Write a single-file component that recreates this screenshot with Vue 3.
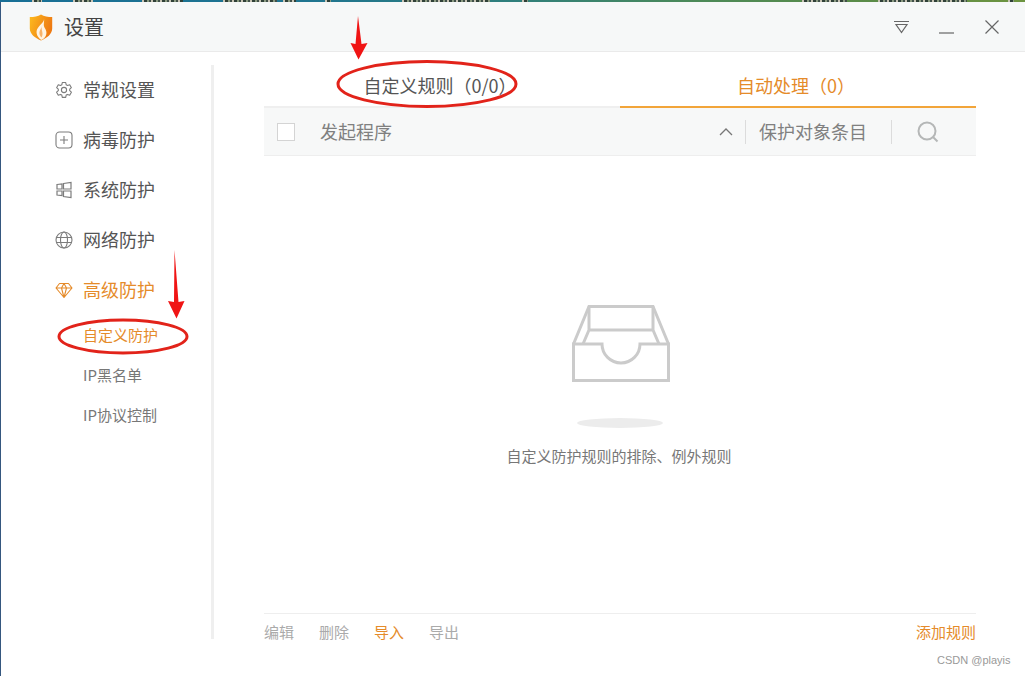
<script setup>
const menu = [
  { label: "常规设置", icon: "gear" },
  { label: "病毒防护", icon: "plus" },
  { label: "系统防护", icon: "tiles" },
  { label: "网络防护", icon: "globe" },
  { label: "高级防护", icon: "diamond", active: true },
];
const subMenu = [
  { label: "自定义防护", active: true },
  { label: "IP黑名单" },
  { label: "IP协议控制" },
];
const actions = [
  { label: "编辑" },
  { label: "删除" },
  { label: "导入", active: true },
  { label: "导出" },
];
// bright bits of the wallpaper showing above the window
const patches = [
  [32, 10], [73, 20], [142, 41], [223, 54], [283, 13], [325, 6],
  [402, 88], [522, 6], [802, 45], [878, 89], [1008, 6],
];
</script>

<template>
  <div class="app">
    <div class="wallpaper">
      <span
        v-for="p in patches"
        :key="p[0]"
        class="patch"
        :style="{ left: p[0] + 'px', width: p[1] + 'px' }"
      />
    </div>

    <div class="window">
      <header class="titlebar">
        <svg class="logo" width="24" height="27" viewBox="0 0 24 27">
          <defs>
            <linearGradient id="shield" x1="0" y1="0" x2="1" y2="0.4">
              <stop offset="0" stop-color="#fdbb1e" />
              <stop offset="1" stop-color="#ee7a12" />
            </linearGradient>
          </defs>
          <path d="M12 .5C9 2.500 5 3 .8 3v11.500C.8 20 6 24 12 26.500c6-2.500 11.200-6.500 11.200-12V3C19 3 15 2.500 12 .5z" fill="url(#shield)" />
          <path d="M15 4.500c.5 4-5 6.500-7 11-1.500 4 .8 8.500 4.500 10.500 3.500-1.500 5.500-5 4.800-8.500-.5-2.500-2-3.500-2.400-5.500-.4-2.500.6-5 .1-7.500z" fill="#fff4e2" />
          <path d="M12.800 12c-.4 2.500-2.200 4-2.400 6.500-.1 2 .8 3.800 2.100 5 .9-1.500 1.300-3.500.8-5.500-.4-2-1-3.500-.5-6z" fill="#f7b36a" />
        </svg>
        <span class="title">设置</span>
        <div class="controls">
          <svg width="15" height="14" viewBox="0 0 15 14" fill="none" stroke="#666" stroke-width="1.200">
            <path d="M0 1.500h15M2 4.500h11L7.500 12.500z" />
          </svg>
          <svg class="minimize" width="15" height="14" viewBox="0 0 15 14" fill="none" stroke="#666" stroke-width="1.200">
            <path d="M0 13h15" />
          </svg>
          <svg width="14" height="14" viewBox="0 0 14 14" fill="none" stroke="#666" stroke-width="1.200">
            <path d="M.5.5l13 13M13.500.5l-13 13" />
          </svg>
        </div>
      </header>

      <div class="body">
        <aside class="sidebar">
          <div
            v-for="item in menu"
            :key="item.label"
            class="menu-item"
            :class="{ active: item.active }"
          >
            <svg class="menu-icon" width="18" height="18" viewBox="0 0 18 18" fill="none" stroke="currentColor" stroke-width="1.100">
              <template v-if="item.icon === 'gear'">
                <path d="M7.300 1.500h3.400l.5 2.300 1.300.7 2.200-.8 1.700 3-1.700 1.500v1.500l1.700 1.500-1.700 3-2.200-.8-1.300.7-.5 2.300H7.300l-.5-2.300-1.300-.7-2.200.8-1.700-3 1.700-1.500V8.200L1.600 6.700l1.700-3 2.200.8 1.300-.7z" stroke-linejoin="round" />
                <circle cx="9" cy="9" r="2.600" />
              </template>
              <template v-else-if="item.icon === 'plus'">
                <rect x="1" y="1" width="16" height="16" rx="3.500" />
                <path d="M9 5v8M5 9h8" />
              </template>
              <template v-else-if="item.icon === 'tiles'">
                <path d="M2 3.500L7 3v5H2zM2 10h5v4.500L2 14zM8.500 2.500L16 1.500V8H8.500zM8.500 10H16v6.500l-7.500-1z" stroke-width="1.200" />
              </template>
              <template v-else-if="item.icon === 'globe'">
                <circle cx="9" cy="9" r="8" />
                <ellipse cx="9" cy="9" rx="3.500" ry="8" />
                <path d="M1.500 6.500h15M1.500 11.500h15" />
              </template>
              <template v-else>
                <path d="M4.500 2.500h9L17 7l-8 9.500L1 7zM1 7h16M6.500 7L9 16.500 11.500 7 9 2.500 6.500 7z" stroke-linejoin="round" />
              </template>
            </svg>
            <span class="menu-label">{{ item.label }}</span>
          </div>
          <div
            v-for="sub in subMenu"
            :key="sub.label"
            class="sub-item"
            :class="{ active: sub.active }"
          >
            {{ sub.label }}
          </div>
        </aside>

        <main class="main">
          <div class="tabs">
            <div class="tab">自定义规则（0/0）</div>
            <div class="tab active">自动处理（0）</div>
          </div>

          <div class="table-head">
            <span class="checkbox" />
            <span class="col-name">发起程序</span>
            <svg class="chevron" width="14" height="8" viewBox="0 0 14 8" fill="none" stroke="#777" stroke-width="1.300">
              <path d="M1 7l6-6 6 6" />
            </svg>
            <span class="col-sep" />
            <span class="col-target">保护对象条目</span>
            <span class="col-sep" />
            <svg class="search" width="22" height="22" viewBox="0 0 22 22" fill="none" stroke="#b5b7b7" stroke-width="2">
              <circle cx="10" cy="10" r="8.500" />
              <path d="M16 16l4.500 4.500" />
            </svg>
          </div>

          <div class="empty">
            <svg width="100" height="78" viewBox="0 0 100 78" fill="none" stroke="#cbcbcb" stroke-width="3">
              <path d="M3.500 39L19 1.500h64L98.500 39" />
              <path d="M19 1.500V25h64V1.500M19 25l-6 14M83 25l6 14" />
              <path d="M3.500 39H32a19 19 0 0 0 38 0h28.500v36.500h-95z" />
            </svg>
            <span class="shadow" />
            <p class="empty-text">自定义防护规则的排除、例外规则</p>
          </div>

          <footer class="footer">
            <span
              v-for="a in actions"
              :key="a.label"
              class="action"
              :class="{ active: a.active }"
            >{{ a.label }}</span>
            <span class="add">添加规则</span>
          </footer>
        </main>
      </div>
    </div>

    <!-- red marks someone drew over the screenshot -->
    <svg class="marks" width="1025" height="676" viewBox="0 0 1025 676" fill="none">
      <ellipse cx="427" cy="84" rx="89" ry="22.500" stroke="#e2231a" stroke-width="3" />
      <ellipse cx="123" cy="336.500" rx="64" ry="16.500" stroke="#e2231a" stroke-width="3" />
      <path d="M358 16L361.500 44l6-1L358.500 59.500 350.500 43l5 1z" fill="#f01414" />
      <path d="M174.500 250L178.500 302l6-1-8 17.500-8.500-17.500 6 1z" fill="#f01414" />
    </svg>

    <span class="watermark">CSDN @playis</span>
  </div>
</template>

<style>
html,
body {
  margin: 0;
  background: #fff;
}
</style>

<style scoped>
.app {
  position: relative;
  width: 1025px;
  height: 676px;
  overflow: hidden;
  display: flex;
  flex-direction: column;
  box-sizing: border-box;
  background: #fff;
  font-family: "Noto Sans CJK SC", "Liberation Sans", sans-serif;
}
.wallpaper {
  position: relative;
  height: 2px;
  flex: none;
  background: linear-gradient(90deg, #176f96 0%, #1f7590 30%, #2f7f7c 50%, #4c8a58 68%, #5b8c48 85%, #6d9440 100%);
}
.patch {
  position: absolute;
  top: 0;
  height: 2px;
  background: repeating-linear-gradient(90deg, #c8c4b4 0 2px, #2f4038 2px 5px, #8a9a80 5px 7px, #40504a 7px 9px);
}
.window {
  flex: 1;
  display: flex;
  flex-direction: column;
  border-left: 1px solid #35577f;
  min-height: 0;
}
.titlebar {
  height: 49px;
  flex: none;
  display: flex;
  align-items: center;
  padding: 0 26px 0 28px;
  background: #f6f8f8;
  border-bottom: 1px solid #eaeaea;
}
.logo {
  margin-top: 1px;
}
.title {
  margin-left: 11px;
  font-size: 20px;
  color: #444;
}
.controls {
  margin-left: auto;
  display: flex;
  align-items: center;
  gap: 30px;
}
.minimize {
  margin-right: 1px;
}
.body {
  flex: 1;
  display: flex;
  align-items: flex-start;
  min-height: 0;
}
.sidebar {
  width: 210px;
  height: 574px;
  margin-top: 13px;
  flex: none;
  border-right: 3px solid #efefef;
}
.menu-item {
  height: 50px;
  display: flex;
  align-items: center;
  padding-left: 54px;
  gap: 10px;
  font-size: 18px;
  color: #555;
}
.menu-label {
  margin-bottom: 2px;
}
.menu-icon {
  color: #7c7c7c;
  flex: none;
}
.menu-item.active,
.menu-item.active .menu-icon {
  color: #e58b2a;
}
.sub-item {
  height: 40px;
  line-height: 40px;
  padding-left: 82px;
  font-size: 15px;
  color: #777;
}
.sub-item.active {
  color: #e58b2a;
}
.main {
  width: 712px;
  height: 574px;
  margin: 14px 0 0 50px;
  flex: none;
  display: flex;
  flex-direction: column;
}
.tabs {
  display: flex;
  flex: none;
}
.tab {
  flex: 1;
  height: 40px;
  line-height: 38px;
  padding-right: 4px;
  text-align: center;
  font-size: 18px;
  color: #555;
  border-bottom: 2px solid #efefef;
}
.tab.active {
  color: #e58b2a;
  border-bottom-color: #f2a53a;
}
.table-head {
  height: 47px;
  flex: none;
  display: flex;
  align-items: center;
  background: #f7f8f8;
  border-bottom: 1px solid #eeeeee;
  font-size: 18px;
  color: #808080;
}
.checkbox {
  width: 16px;
  height: 16px;
  margin-left: 13px;
  border: 1px solid #d4d4d4;
  background: #fff;
  flex: none;
}
.col-name {
  margin: 0 0 2px 25px;
}
.chevron {
  margin-left: auto;
}
.col-sep {
  width: 1px;
  height: 24px;
  background: #dcdcdc;
  flex: none;
}
.chevron + .col-sep {
  margin-left: 12px;
}
.col-target {
  margin: 0 24px 2px 13px;
}
.search {
  margin: 0 37px 0 25px;
}
.empty {
  flex: 1;
  display: flex;
  flex-direction: column;
  align-items: center;
  padding-top: 149px;
  min-height: 0;
}
.shadow {
  width: 86px;
  height: 10px;
  margin-top: 35px;
  border-radius: 50%;
  background: #ececec;
}
.empty-text {
  margin: 18px 2px 0 0;
  font-size: 15px;
  line-height: 20px;
  color: #777;
}
.footer {
  height: 27px;
  box-sizing: border-box;
  flex: none;
  display: flex;
  align-items: flex-start;
  gap: 25px;
  padding-top: 7px;
  border-top: 1px solid #eeeeee;
  font-size: 15px;
  line-height: 22px;
  color: #aaa;
}
.action.active,
.add {
  color: #e58b2a;
}
.add {
  margin-left: auto;
}
.marks {
  position: absolute;
  top: 0;
  left: 0;
  pointer-events: none;
}
.watermark {
  position: absolute;
  left: 937px;
  top: 653px;
  font-family: "Liberation Sans", sans-serif;
  font-size: 11px;
  line-height: 14px;
  color: #999;
}
</style>
